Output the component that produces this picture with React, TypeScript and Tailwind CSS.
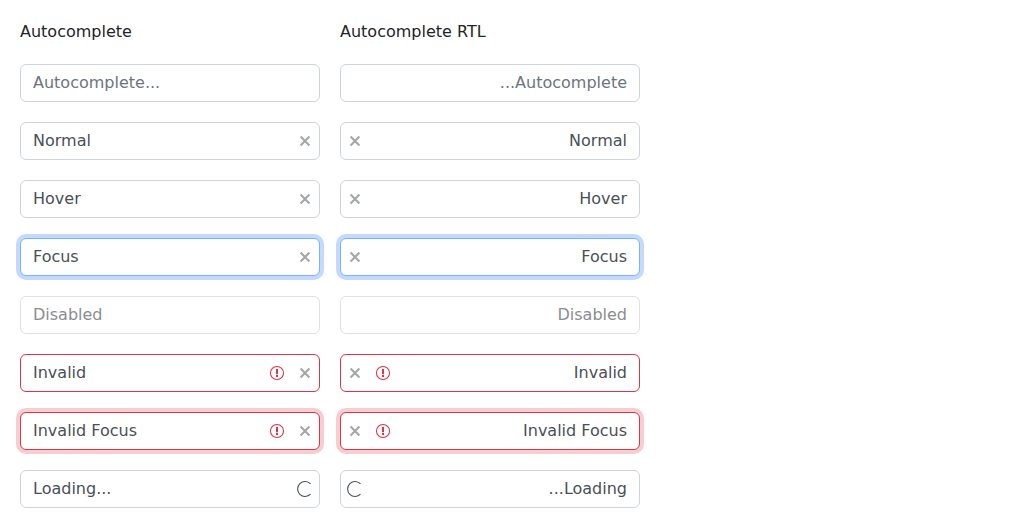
type State = "empty" | "normal" | "focus" | "disabled" | "invalid" | "invalidFocus" | "loading";

const rows: { text: string; state: State }[] = [
  { text: "Autocomplete...", state: "empty" },
  { text: "Normal", state: "normal" },
  { text: "Hover", state: "normal" },
  { text: "Focus", state: "focus" },
  { text: "Disabled", state: "disabled" },
  { text: "Invalid", state: "invalid" },
  { text: "Invalid Focus", state: "invalidFocus" },
  { text: "Loading...", state: "loading" },
];

const styles: Record<State, string> = {
  empty: "border-[#ced4da] text-[#6c757d]",
  normal: "border-[#ced4da] text-[#495057]",
  focus: "border-[#80b1ff] text-[#495057] shadow-[0_0_0_4px_#c2dafe]",
  disabled: "border-[#dfe1e4] text-[#8a8d91]",
  invalid: "border-[#dc3545] text-[#495057]",
  invalidFocus: "border-[#dc3545] text-[#495057] shadow-[0_0_0_4px_#f6cdd1]",
  loading: "border-[#ced4da] text-[#495057]",
};

function ClearIcon() {
  return (
    <svg className="size-4 shrink-0" viewBox="0 0 16 16" fill="none" stroke="#a4a7aa" strokeWidth="2.15">
      <path d="M3.6 3.6l8.8 8.8M12.4 3.6l-8.8 8.8" />
    </svg>
  );
}

function WarningIcon() {
  return (
    <svg className="size-4 shrink-0" viewBox="0 0 16 16">
      <circle cx="8" cy="8" r="6.55" fill="none" stroke="#dc3545" strokeWidth="1.05" />
      <path d="M7 4h2v5.2H7zM7 10h2v2H7z" fill="#dc3545" />
    </svg>
  );
}

function Spinner() {
  return (
    <svg className="size-4 shrink-0" viewBox="0 0 16 16" fill="none" stroke="#495057" strokeWidth="1.1">
      <path d="M13.5 2.9A7.45 7.45 0 1 0 13.5 13.1" />
    </svg>
  );
}

function Field({ text, state }: { text: string; state: State }) {
  const invalid = state === "invalid" || state === "invalidFocus";
  const clearable = invalid || state === "normal" || state === "focus";
  return (
    <div className={`flex h-[38px] items-center rounded-[6px] border bg-white ps-3 pe-1.5 ${styles[state]}`}>
      <span className="grow leading-6">{text}</span>
      {invalid && <span className="me-3"><WarningIcon /></span>}
      {clearable && <ClearIcon />}
      {state === "loading" && <Spinner />}
    </div>
  );
}

function Column({ title, dir }: { title: string; dir: "ltr" | "rtl" }) {
  return (
    <section className="w-[300px]">
      <h2 className="mb-5 h-6 leading-6 text-[#212529]">{title}</h2>
      <div dir={dir} className="flex flex-col gap-5">
        {rows.map((r) => <Field key={r.text} text={r.text} state={r.state} />)}
      </div>
    </section>
  );
}

export default function App() {
  return (
    <main className="flex h-[528px] gap-5 bg-white px-5 pt-5 font-['DejaVu_Sans',sans-serif] text-base">
      <Column title="Autocomplete" dir="ltr" />
      <Column title="Autocomplete RTL" dir="rtl" />
    </main>
  );
}
